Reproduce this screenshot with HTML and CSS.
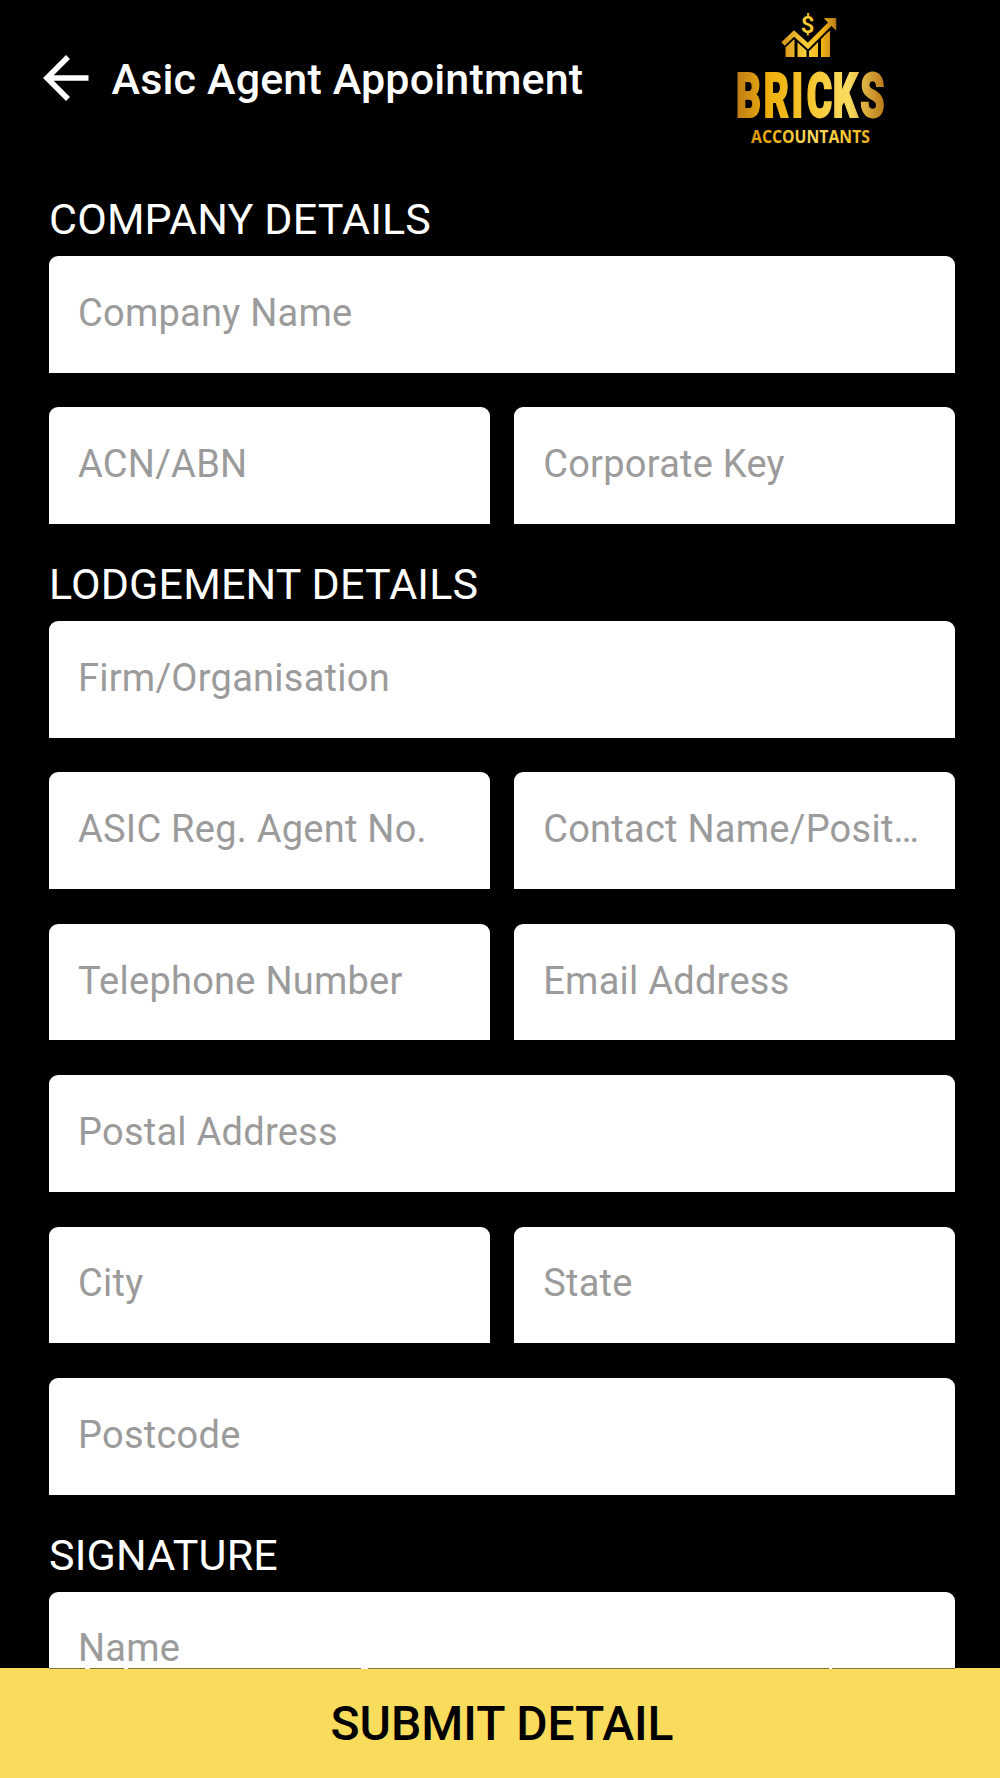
FILE: index.html
```html
<!DOCTYPE html>
<html lang="en">
<head>
    <meta charset="UTF-8">
    <meta name="viewport" content="width=device-width, initial-scale=1.0">
    <title>Asic Agent Appointment</title>
    <link rel="stylesheet" href="styles.css">
</head>
<body>
    <div class="screen">
        <header class="header">
            <button class="back" aria-label="Back">
                <svg width="46" height="46" viewBox="0 0 46 46">
                    <path d="M25 2 L4 23 L25 44 M4 23 H45.5" fill="none" stroke="#fff" stroke-width="5.6"/>
                </svg>
            </button>
            <h1 class="title">Asic Agent Appointment</h1>
            <svg class="logo" width="180" height="160" viewBox="0 0 180 160">
                <defs>
                    <linearGradient id="gold" gradientUnits="userSpaceOnUse" x1="17" y1="0" x2="164" y2="0">
                        <stop offset="0" stop-color="#c07f16"/>
                        <stop offset="0.22" stop-color="#efb00c"/>
                        <stop offset="0.5" stop-color="#f9dc60"/>
                        <stop offset="0.76" stop-color="#f6c62e"/>
                        <stop offset="1" stop-color="#e0a41c"/>
                    </linearGradient>
                    <linearGradient id="goldName" gradientUnits="userSpaceOnUse" x1="27" y1="0" x2="255" y2="0">
                        <stop offset="0" stop-color="#c07f16"/>
                        <stop offset="0.22" stop-color="#efb00c"/>
                        <stop offset="0.5" stop-color="#f6c62e"/>
                        <stop offset="0.76" stop-color="#f9dc60"/>
                        <stop offset="1" stop-color="#bd7d1c"/>
                    </linearGradient>
                    <linearGradient id="goldMark" gradientUnits="userSpaceOnUse" x1="62" y1="0" x2="116" y2="0">
                        <stop offset="0" stop-color="#d4931a"/>
                        <stop offset="0.45" stop-color="#fbcf3a"/>
                        <stop offset="0.75" stop-color="#efb211"/>
                        <stop offset="1" stop-color="#bd7d1c"/>
                    </linearGradient>
                </defs>
                <!-- chart bars, trend line and arrow head -->
                <path d="M65.5 42 L74.5 34 V57 H65.5 Z M77.5 36 L86.5 45 V57 H77.5 Z M89 46 L98 38 V57 H89 Z M101 36 L110 30.5 V57 H101 Z" fill="url(#goldMark)"/>
                <path d="M63 44 L74 33.5 L88 46 L110 24" fill="none" stroke="#000" stroke-width="8.6"/>
                <path d="M63 44 L74 33.5 L88 46 L110 24" fill="none" stroke="url(#goldMark)" stroke-width="4.8"/>
                <path d="M104.5 18.5 H115.8 V30 Z" fill="url(#goldMark)" stroke="url(#goldMark)" stroke-width="0.8"/>
                <text class="logo-dollar" x="87.5" y="32.5" text-anchor="middle" fill="url(#goldMark)">$</text>
                <text class="logo-name" transform="scale(0.64 1)" x="25 68.3 111.6 135.6 176 219" y="116.8" fill="url(#goldName)" stroke="url(#goldName)">BRICKS</text>
                <text class="logo-sub" x="31" y="142.5" textLength="119" lengthAdjust="spacingAndGlyphs" fill="url(#gold)">ACCOUNTANTS</text>
            </svg>
        </header>

        <form class="form">
            <h2 class="section">COMPANY DETAILS</h2>
            <div class="fields">
                <input class="field wide" type="text" placeholder="Company Name">
                <input class="field" type="text" placeholder="ACN/ABN">
                <input class="field" type="text" placeholder="Corporate Key">
            </div>

            <h2 class="section">LODGEMENT DETAILS</h2>
            <div class="fields">
                <input class="field wide" type="text" placeholder="Firm/Organisation">
                <input class="field" type="text" placeholder="ASIC Reg. Agent No.">
                <input class="field" type="text" placeholder="Contact Name/Position">
                <input class="field" type="text" placeholder="Telephone Number">
                <input class="field" type="text" placeholder="Email Address">
                <input class="field wide" type="text" placeholder="Postal Address">
                <input class="field" type="text" placeholder="City">
                <input class="field" type="text" placeholder="State">
                <input class="field wide" type="text" placeholder="Postcode">
            </div>

            <h2 class="section">SIGNATURE</h2>
            <div class="fields">
                <input class="field wide" type="text" placeholder="Name">
            </div>
        </form>

        <button class="submit">
            <svg class="submit-edge" width="1000" height="1" viewBox="0 0 1000 1">
                <path d="M49 0.5 H85 M90 0.5 H124 M128 0.5 H361 M368 0.5 H829 M832 0.5 H955" stroke="#85733a"/>
                <path d="M85 0.5 H90 M124 0.5 H128 M361 0.5 H368 M829 0.5 H832" stroke="#fff"/>
            </svg>
            <span class="submit-label">SUBMIT DETAIL</span>
        </button>
    </div>
</body>
</html>
```

FILE: styles.css
```css
* {
    box-sizing: border-box;
}

body {
    margin: 0;
    background-color: #000;
    font-family: Roboto, sans-serif;
}

.screen {
    display: flex;
    flex-direction: column;
    width: 1000px;
    height: 1778px;
    overflow: hidden;
    background-color: #000;
}

/* Header */
.header {
    display: flex;
    align-items: center;
    flex-shrink: 0;
    height: 160px;
    padding: 0 100px 0 43px;
}

.back {
    display: flex;
    padding: 0;
    margin-top: -4px;
    border: none;
    background: none;
    cursor: pointer;
}

.title {
    margin: -2px 0 0 22.5px;
    color: #fff;
    font-size: 43px;
    font-weight: 500;
    line-height: 50px;
    letter-spacing: 0.15px;
    white-space: nowrap;
}

.logo {
    flex-shrink: 0;
    margin-left: auto;
}

.logo-dollar {
    font-size: 24px;
    font-weight: 600;
}

.logo-name {
    font-size: 60.5px;
    font-weight: 900;
    stroke-width: 1.8px;
}

.logo-sub {
    font-family: "Open Sans", sans-serif;
    font-size: 17px;
    font-weight: 700;
}

/* Form */
.form {
    flex: 1;
    min-height: 0;
    padding: 34px 44.6px 0 49px;
    overflow: hidden;
}

.section {
    height: 62px;
    margin: 0;
    color: #fff;
    font-size: 43px;
    font-weight: 400;
    line-height: 50px;
    letter-spacing: 0.17px;
}

.fields {
    display: grid;
    grid-template-columns: 1fr 1fr;
    gap: 34.8px 24px;
    margin-bottom: 35px;
}

.field {
    width: 100%;
    min-width: 0;
    height: 116.6px;
    padding: 0 28px 3px 29px;
    border: none;
    border-radius: 9px 9px 0 0;
    background-color: #fff;
    color: #222;
    font-family: inherit;
    font-size: 38px;
    letter-spacing: 0.25px;
    text-overflow: ellipsis;
    outline: none;
}

.field::placeholder {
    color: #9b9b9b;
    opacity: 1;
}

.wide {
    grid-column: 1 / -1;
}

/* Submit bar */
.submit {
    display: flex;
    flex-direction: column;
    align-items: center;
    flex-shrink: 0;
    height: 110px;
    padding: 0;
    border: none;
    background-color: #f9dc5c;
    color: #000;
    font-family: inherit;
    font-size: 48px;
    font-weight: 500;
    line-height: 110px;
    cursor: pointer;
}

.submit-edge {
    display: block;
    flex-shrink: 0;
}

.submit-label {
    padding-left: 4px;
}
```
